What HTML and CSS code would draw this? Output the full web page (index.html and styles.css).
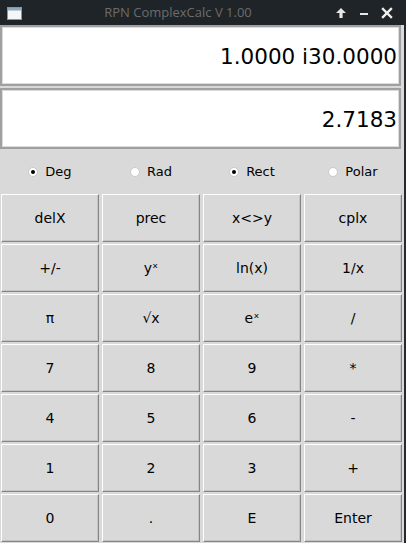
FILE: index.html
```html
<!DOCTYPE html>
<html>
<head>
<meta charset="utf-8">
<link rel="stylesheet" href="styles.css">
</head>
<body>
<div class="window">
  <div class="titlebar">
    <div class="app-icon">
      <svg width="15" height="13" viewBox="0 0 15 13">
        <rect x="0.5" y="0.5" width="14" height="12" fill="#f4f6f8" stroke="#8a96a4"/>
        <rect x="1" y="1" width="13" height="2.5" fill="#8ea7c2"/>
      </svg>
    </div>
    <div class="title">RPN ComplexCalc V 1.00</div>
    <div class="controls">
      <span class="ctl">
        <svg width="12" height="12" viewBox="0 0 12 12"><path d="M6 1 L11 6 L7.6 6 L7.6 11 L4.4 11 L4.4 6 L1 6 Z" fill="#e6e6e6"/></svg>
      </span>
      <span class="ctl">
        <svg width="12" height="12" viewBox="0 0 12 12"><rect x="2" y="6" width="8" height="2" fill="#e6e6e6"/></svg>
      </span>
      <span class="ctl">
        <svg width="12" height="12" viewBox="0 0 12 12"><path d="M2 2 L10 10 M10 2 L2 10" stroke="#f0f0f0" stroke-width="2.4" stroke-linecap="square"/></svg>
      </span>
    </div>
  </div>
  <div class="main">
    <div class="display">1.0000 i30.0000</div>
    <div class="display second">2.7183</div>
    <div class="radios">
      <label class="radio"><span class="dot on"></span>Deg</label>
      <label class="radio"><span class="dot"></span>Rad</label>
      <label class="radio"><span class="dot on"></span>Rect</label>
      <label class="radio"><span class="dot"></span>Polar</label>
    </div>
    <div class="keys">
      <div class="key">delX</div>
      <div class="key">prec</div>
      <div class="key">x&lt;&gt;y</div>
      <div class="key">cplx</div>
      <div class="key">+/-</div>
      <div class="key">yˣ</div>
      <div class="key">ln(x)</div>
      <div class="key">1/x</div>
      <div class="key">π</div>
      <div class="key">√x</div>
      <div class="key">eˣ</div>
      <div class="key">/</div>
      <div class="key">7</div>
      <div class="key">8</div>
      <div class="key">9</div>
      <div class="key">*</div>
      <div class="key">4</div>
      <div class="key">5</div>
      <div class="key">6</div>
      <div class="key">-</div>
      <div class="key">1</div>
      <div class="key">2</div>
      <div class="key">3</div>
      <div class="key">+</div>
      <div class="key">0</div>
      <div class="key">.</div>
      <div class="key">E</div>
      <div class="key">Enter</div>
    </div>
  </div>
</div>
</body>
</html>
```

FILE: styles.css
```css
* { box-sizing: border-box; }
html, body { margin: 0; padding: 0; }
body {
  background: #d9d9d9;
  font-family: "DejaVu Sans", sans-serif;
  width: 406px;
  height: 543px;
  overflow: hidden;
}
.window {
  width: 406px;
  height: 543px;
  display: flex;
  flex-direction: column;
}
.titlebar {
  height: 25px;
  background: #1f2428;
  display: flex;
  align-items: center;
  flex: none;
}
.app-icon {
  width: 30px;
  padding-left: 7px;
  display: flex;
  align-items: center;
  padding-top: 1px;
}
.title {
  flex: 1;
  text-align: center;
  color: #6c6c6c;
  font-family: "Open Sans", "Noto Sans", sans-serif;
  font-size: 13px;
  line-height: 25px;
}
.controls {
  width: 80px;
  display: flex;
  align-items: center;
  padding-left: 9px;
  gap: 11px;
}
.ctl {
  width: 12px;
  height: 12px;
  display: flex;
}
.main {
  flex: 1;
  display: flex;
  flex-direction: column;
  border-right: 2px solid #262a2e;
}
.display {
  height: 61px;
  width: 401px;
  background: #fff;
  border: 2px solid #a0a0a0;
  box-shadow: inset 0 0 0 1px #dcdcdc;
  font-size: 21.5px;
  color: #000;
  display: flex;
  align-items: center;
  justify-content: flex-end;
  padding-right: 2px;
  padding-top: 1px;
}
.display.second {
  margin-top: 2px;
}
.radios {
  height: 45px;
  display: grid;
  grid-template-columns: repeat(4, 98px);
  column-gap: 3px;
  margin-left: 1px;
  align-items: center;
  font-size: 13px;
}
.radio {
  display: flex;
  align-items: center;
  justify-content: center;
  gap: 7px;
  color: #000;
}
.dot {
  width: 10px;
  height: 10px;
  border-radius: 50%;
  background: #fff;
  border: 1px solid #c8c8c8;
  display: flex;
  align-items: center;
  justify-content: center;
}
.dot.on::after {
  content: "";
  width: 4px;
  height: 4px;
  border-radius: 50%;
  background: #000;
}
.keys {
  display: grid;
  grid-template-columns: repeat(4, 98px);
  grid-auto-rows: 48px;
  column-gap: 3px;
  row-gap: 2px;
  margin-left: 1px;
}
.key {
  background: #d9d9d9;
  border-top: 1px solid #ffffff;
  border-left: 1px solid #ffffff;
  border-right: 1px solid #858585;
  border-bottom: 1px solid #858585;
  box-shadow: inset -1px -1px 0 #c4c4c4;
  display: flex;
  align-items: center;
  justify-content: center;
  font-size: 14px;
  color: #000;
}
```
